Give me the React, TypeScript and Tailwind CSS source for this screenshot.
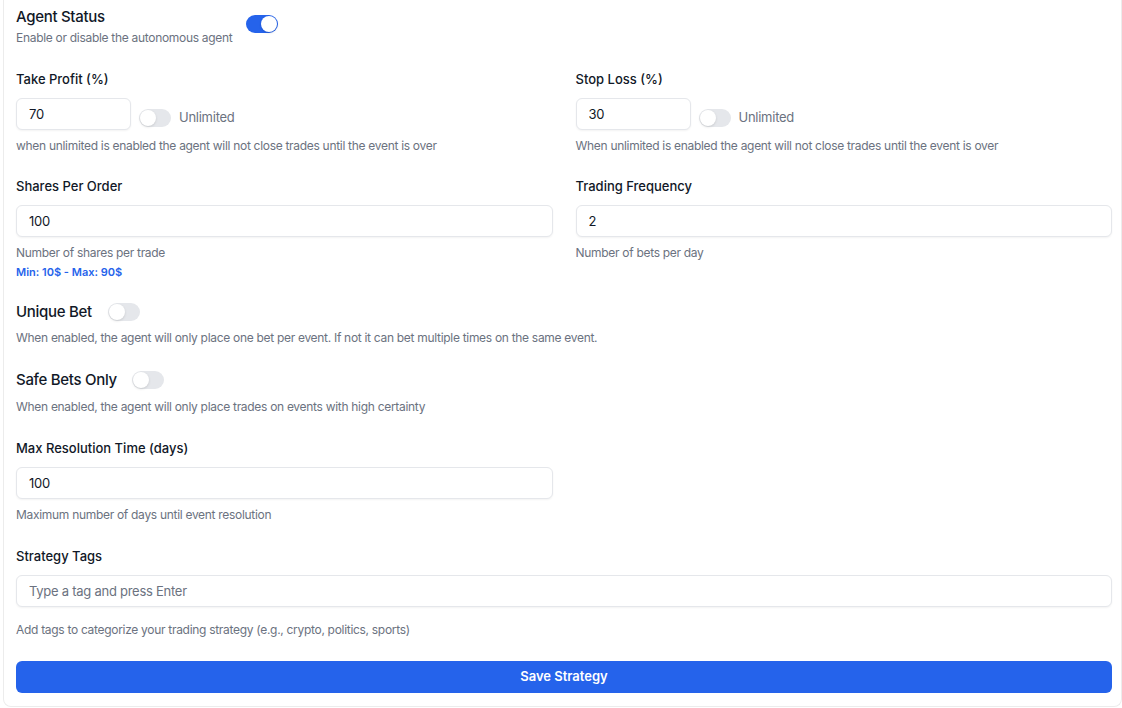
import { useState } from "react";

function Toggle({ on, onChange }: { on: boolean; onChange?: (v: boolean) => void }) {
    return (
        <button
            type="button"
            onClick={() => onChange?.(!on)}
            className={`relative inline-flex h-[18px] w-8 shrink-0 items-center rounded-full transition-colors ${
                on ? "bg-[#2563eb]" : "bg-[#e5e7eb]"
            }`}
        >
            <span
                className={`block h-4 w-4 rounded-full bg-white shadow-sm transition-transform ${
                    on ? "translate-x-[15px]" : "translate-x-px"
                }`}
            />
        </button>
    );
}

function Label({ children }: { children: React.ReactNode }) {
    return <p className="text-[13px] font-medium leading-5 text-[#111827]">{children}</p>;
}

function Help({ children, className = "" }: { children: React.ReactNode; className?: string }) {
    return <p className={`text-xs leading-4 tracking-[-0.025em] text-[#6b7280] ${className}`}>{children}</p>;
}

function Field({ value, className = "", placeholder }: { value?: string; className?: string; placeholder?: string }) {
    return (
        <input
            defaultValue={value}
            placeholder={placeholder}
            className={`h-8 rounded-md border border-[#e5e7eb] bg-white px-3 text-[13px] tracking-[-0.02em] text-[#111827] shadow-xs outline-none placeholder:text-[#6b7280] ${className}`}
        />
    );
}

export default function App() {
    const [agent, setAgent] = useState(true);
    const [tpUnlimited, setTpUnlimited] = useState(false);
    const [slUnlimited, setSlUnlimited] = useState(false);
    const [unique, setUnique] = useState(false);
    const [safe, setSafe] = useState(false);

    return (
        <div className="min-h-screen bg-white font-['Inter','Noto_Sans',sans-serif]">
            <div className="ml-[3px] rounded-b-lg border-x border-b border-[#ececec] bg-white pl-3 pr-[9px] pb-[13px] pt-[5px]">
                {/* agent status */}
                <div className="flex items-center gap-3.5">
                    <div>
                        <h3 className="text-[15px] font-medium leading-6 tracking-[-0.02em] text-[#111827]">Agent Status</h3>
                        <Help className="mt-px">Enable or disable the autonomous agent</Help>
                    </div>
                    <div className="mt-[1px]">
                        <Toggle on={agent} onChange={setAgent} />
                    </div>
                </div>

                {/* take profit / stop loss */}
                <div className="mt-[23px] grid grid-cols-2 gap-x-[23px]">
                    <div>
                        <Label>Take Profit (%)</Label>
                        <div className="mt-[9px] flex items-center gap-2">
                            <Field value="70" className="w-[115px]" />
                            <div className="mt-[7px] flex items-center gap-2">
                                <Toggle on={tpUnlimited} onChange={setTpUnlimited} />
                                <span className="text-[13px] tracking-[-0.02em] text-[#6b7280]">Unlimited</span>
                            </div>
                        </div>
                        <Help className="mt-2">when unlimited is enabled the agent will not close trades until the event is over</Help>
                    </div>
                    <div>
                        <Label>Stop Loss (%)</Label>
                        <div className="mt-[9px] flex items-center gap-2">
                            <Field value="30" className="w-[115px]" />
                            <div className="mt-[7px] flex items-center gap-2">
                                <Toggle on={slUnlimited} onChange={setSlUnlimited} />
                                <span className="text-[13px] tracking-[-0.02em] text-[#6b7280]">Unlimited</span>
                            </div>
                        </div>
                        <Help className="mt-2">When unlimited is enabled the agent will not close trades until the event is over</Help>
                    </div>
                </div>

                {/* shares / frequency */}
                <div className="mt-[22px] grid grid-cols-2 gap-x-[23px]">
                    <div>
                        <Label>Shares Per Order</Label>
                        <Field value="100" className="mt-[9px] w-full" />
                        <Help className="mt-2">Number of shares per trade</Help>
                        <p className="mt-[3px] text-[11px] font-semibold leading-4 text-[#2563eb]">Min: 10$ - Max: 90$</p>
                    </div>
                    <div>
                        <Label>Trading Frequency</Label>
                        <Field value="2" className="mt-[9px] w-full" />
                        <Help className="mt-2">Number of bets per day</Help>
                    </div>
                </div>

                {/* unique bet */}
                <div className="mt-5">
                    <div className="flex items-center gap-4">
                        <h3 className="text-[15px] font-medium leading-6 tracking-[-0.02em] text-[#111827]">Unique Bet</h3>
                        <Toggle on={unique} onChange={setUnique} />
                    </div>
                    <Help className="mt-1.5">
                        When enabled, the agent will only place one bet per event. If not it can bet multiple times on the same event.
                    </Help>
                </div>

                {/* safe bets */}
                <div className="mt-[22px]">
                    <div className="flex items-center gap-[15px]">
                        <h3 className="text-[15px] font-medium leading-6 tracking-[-0.02em] text-[#111827]">Safe Bets Only</h3>
                        <Toggle on={safe} onChange={setSafe} />
                    </div>
                    <Help className="mt-[7px]">When enabled, the agent will only place trades on events with high certainty</Help>
                </div>

                {/* resolution time */}
                <div className="mt-[23px] grid grid-cols-2 gap-x-[23px]">
                    <div>
                        <Label>Max Resolution Time (days)</Label>
                        <Field value="100" className="mt-[9px] w-full" />
                        <Help className="mt-2">Maximum number of days until event resolution</Help>
                    </div>
                </div>

                {/* tags */}
                <div className="mt-[23px]">
                    <Label>Strategy Tags</Label>
                    <Field placeholder="Type a tag and press Enter" className="mt-[9px] w-full" />
                    <Help className="mt-[15px]">Add tags to categorize your trading strategy (e.g., crypto, politics, sports)</Help>
                </div>

                <button
                    type="button"
                    className="mt-[23px] h-8 w-full rounded-md bg-[#2563eb] text-[13px] font-semibold text-white"
                >
                    Save Strategy
                </button>
            </div>
        </div>
    );
}
